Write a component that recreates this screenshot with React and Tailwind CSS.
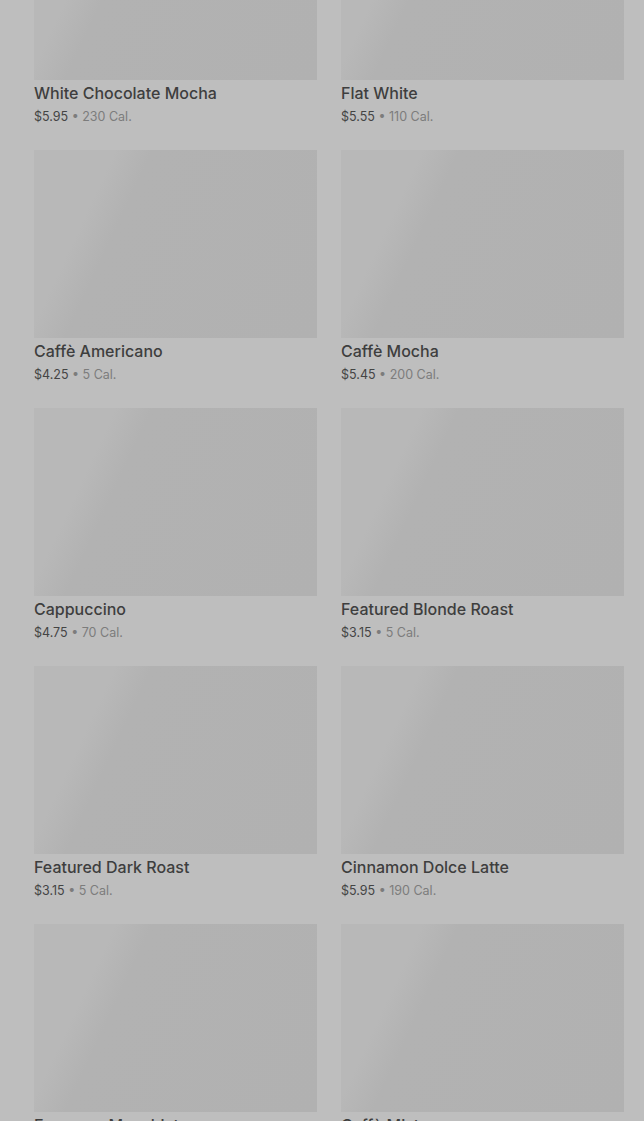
const drinks = [
  { name: "White Chocolate Mocha", price: "$5.95", cal: "230 Cal." },
  { name: "Flat White", price: "$5.55", cal: "110 Cal." },
  { name: "Caffè Americano", price: "$4.25", cal: "5 Cal." },
  { name: "Caffè Mocha", price: "$5.45", cal: "200 Cal." },
  { name: "Cappuccino", price: "$4.75", cal: "70 Cal." },
  { name: "Featured Blonde Roast", price: "$3.15", cal: "5 Cal." },
  { name: "Featured Dark Roast", price: "$3.15", cal: "5 Cal." },
  { name: "Cinnamon Dolce Latte", price: "$5.95", cal: "190 Cal." },
  { name: "Espresso Macchiato", price: "$3.25", cal: "15 Cal." },
  { name: "Caffè Misto", price: "$4.25", cal: "110 Cal." },
];

function DrinkCard({ drink }) {
  return (
    <div className="flex flex-col">
      {/* skeleton image */}
      <div className="h-[188px] w-full bg-[linear-gradient(115deg,#b8b8b8_0%,#b8b8b8_22%,#b2b2b2_32%,#b1b1b1_100%)]"></div>
      <div className="pt-[1px] h-[70px]">
        <h3 className="text-[16px] leading-[24px] font-medium text-[#3e3e3e]">{drink.name}</h3>
        <p className="text-[12.5px] leading-[23px]">
          <span className="text-[#444]">{drink.price}</span>
          <span className="text-[#7c7c7c]"> • {drink.cal}</span>
        </p>
      </div>
    </div>
  );
}

export default function App() {
  return (
    <div className="min-h-screen h-[1121px] overflow-hidden bg-[#bebebe] font-['Inter',sans-serif]">
      <div className="pl-[34px] pr-[20px] mt-[-108px] grid grid-cols-2 gap-x-[24px]">
        {drinks.map((d) => (
          <DrinkCard key={d.name} drink={d} />
        ))}
      </div>
    </div>
  );
}
